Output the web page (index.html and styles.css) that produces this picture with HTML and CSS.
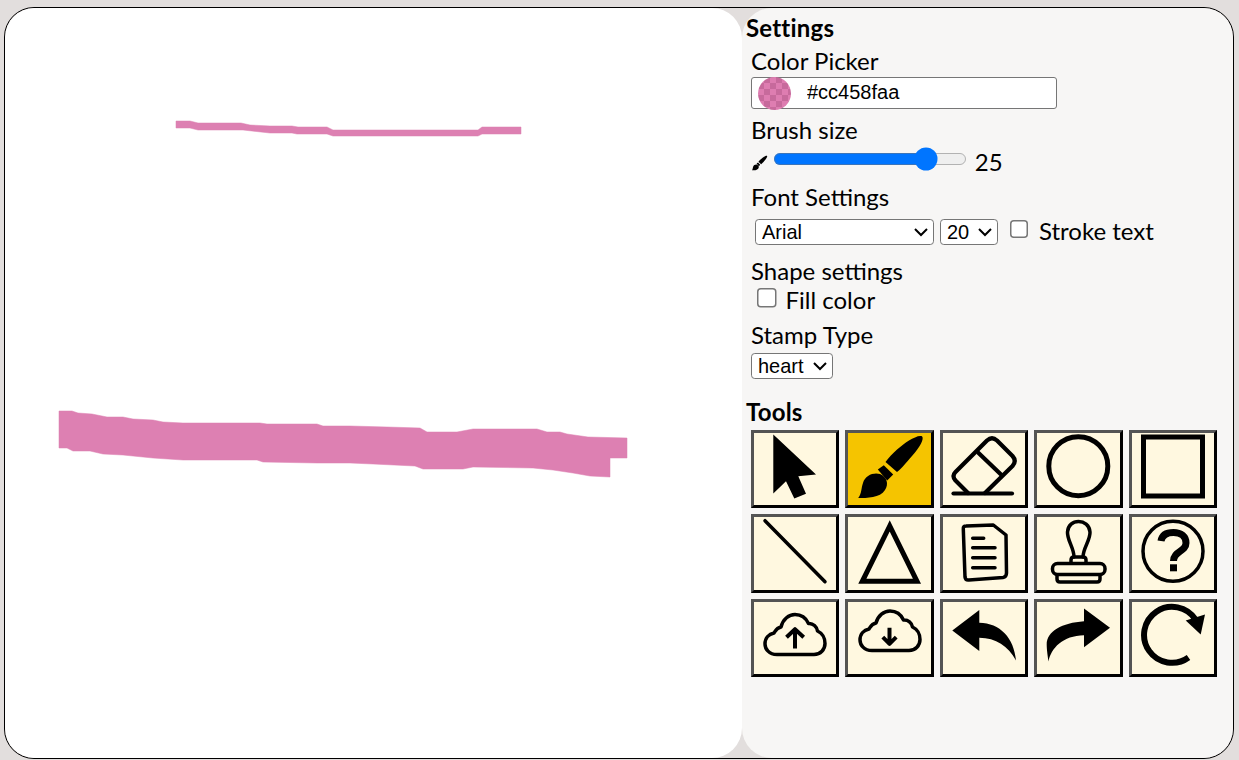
FILE: index.html
```html
<!DOCTYPE html>
<html lang="en">
<head>
  <meta charset="UTF-8">
  <title>Paint</title>
  <link rel="stylesheet" href="styles.css">
</head>
<body>

  <main class="app">
    <div class="canvas">
      <svg class="drawing" viewBox="5 8 737 750" width="737" height="750">
        <polygon class="ink" points="176,121 190,121 198,123 241,123 250,125 270,126 292,126 298,127 327,127 333,130 478,130 482,127 521,127 521,134 482,134 478,136 333,136 327,134 297,134 292,133 270,133 243,130 198,130 190,128 176,128"/>
        <polygon class="ink" points="59,411 72,411 78,413 92,414 107,417 123,417 133,419 153,420 163,422 183,423 260,423 267,424 317,424 323,426 350,426 387,427 420,428 427,432 457,432 473,429 537,429 547,432 560,432 567,434 588,437 627,438 627,458 610,458 610,477 590,476 573,473 553,470 533,468 473,467 463,469 423,469 415,466 373,464 350,463 317,463 263,462 257,460 183,460 153,458 123,455 103,454 90,451 73,451 67,448 59,448"/>
      </svg>
    </div>

    <aside class="panel">
      <h2 class="panel-title">Settings</h2>

      <div class="group group-color">
        <div class="group-label">Color Picker</div>
        <div class="color-field">
          <span class="swatch"></span>
          <input class="color-text" type="text" value="#cc458faa">
        </div>
      </div>

      <div class="group">
        <div class="group-label">Brush size</div>
        <div class="brush-row">
          <svg class="brush-mini" viewBox="0 0 72 72" width="17" height="17">
            <path d="M68 3.200C70.500 5.500 66 14 58 23C52 30 47 36 43 39L31.500 29C38 20 48 12 55 7.500C60 4.500 65 2 68 3.200Z"/>
            <path d="M23.800 36.500L29.800 32.200L39.200 41.500L33.200 47.500Z"/>
            <path d="M4.200 65C8 60 7 55 9 50C11 42 20 39 26 41C33 44 35 51 31 57C26 65 13 65 4.200 65Z"/>
          </svg>
          <input class="control brush-range" type="range" min="0" max="30" value="25">
          <span class="brush-value">25</span>
        </div>
      </div>

      <div class="group">
        <div class="group-label">Font Settings</div>
        <div class="font-row">
          <select class="control font-family"><option>Arial</option></select>
          <select class="control font-size"><option>20</option></select>
          <input class="control check check-stroke" type="checkbox">
          <span>Stroke text</span>
        </div>
      </div>

      <div class="group group-shape">
        <div class="group-label">Shape settings</div>
        <div class="fill-row">
          <input class="control check" type="checkbox">
          <span>Fill color</span>
        </div>
      </div>

      <div class="group">
        <div class="group-label">Stamp Type</div>
        <select class="control stamp-select"><option>heart</option></select>
      </div>

      <h2 class="panel-title tools-title">Tools</h2>

      <div class="tools">
        <button class="tool">
          <svg viewBox="0 0 72 72"><path d="M14.300 1.500L57 41.500L39.300 43.200L47 60.800L35.300 65.500L27 48.200L14.300 60.500Z"/></svg>
        </button>
        <button class="tool active">
          <svg viewBox="0 0 72 72">
            <path d="M68 3.200C70.500 5.500 66 14 58 23C52 30 47 36 43 39L31.500 29C38 20 48 12 55 7.500C60 4.500 65 2 68 3.200Z"/>
            <path d="M23.800 36.500L29.800 32.200L39.200 41.500L33.200 47.500Z"/>
            <path d="M4.200 65C8 60 7 55 9 50C11 42 20 39 26 41C33 44 35 51 31 57C26 65 13 65 4.200 65Z"/>
          </svg>
        </button>
        <button class="tool">
          <svg viewBox="0 0 72 72" class="line-icon icon-thick">
            <path d="M20 60L7.500 47.500Q3.500 43 7.500 39L39 7.500Q44 3 49 7.500L64.500 23Q69 28 64.500 33L37 60"/>
            <path d="M30.300 19.800L53 41.500"/>
            <path d="M5.500 60.500H64"/>
          </svg>
        </button>
        <button class="tool">
          <svg viewBox="0 0 72 72" class="line-icon"><circle cx="36.300" cy="33.200" r="29.500" stroke-width="5"/></svg>
        </button>
        <button class="tool">
          <svg viewBox="0 0 72 72" class="line-icon"><rect x="6.500" y="4" width="59" height="59" stroke-width="5" stroke-linejoin="miter"/></svg>
        </button>

        <button class="tool">
          <svg viewBox="0 0 72 72" class="line-icon"><path d="M6 2.700L66 63.700"/></svg>
        </button>
        <button class="tool">
          <svg viewBox="0 0 72 72" class="line-icon"><path d="M35.700 8L8.300 63.300H63Z" stroke-width="5" stroke-linejoin="miter"/></svg>
        </button>
        <button class="tool">
          <svg viewBox="0 0 72 72" class="line-icon">
            <path d="M15.300 11Q15 8 18 8L45.300 7L58 17L58.500 55Q58.500 59 55 59.500L21 62Q17.500 62.500 17 59Z"/>
            <path d="M24.700 20.300H35.700M24.700 29.700H47M24.700 39.700H47M24.700 49.700H47"/>
          </svg>
        </button>
        <button class="tool">
          <svg viewBox="0 0 72 72" class="line-icon">
            <path d="M32 39C32 30 25 22 25.500 14C26 7 31 3.500 36.500 3.500C42 3.500 47.500 7 48 14C48.500 22 41 30 41 39"/>
            <path d="M29 45V42Q29 39 32 39H41Q44 39 44 42V45"/>
            <rect x="10.500" y="45.500" width="52.500" height="11" rx="5"/>
            <path d="M15 57V61Q15 64 18 64H55Q58 64 58 61V57"/>
          </svg>
        </button>
        <button class="tool">
          <svg viewBox="0 0 72 72" class="line-icon">
            <circle cx="36" cy="33.300" r="30"/>
            <path d="M24 23C25 17 30 14.500 36.500 14.500C44 14.500 49 18.500 49 25C49 34 36.500 33 36.500 43" stroke-width="7" stroke-linecap="butt"/>
            <rect class="solid" x="33" y="46.300" width="7" height="7"/>
          </svg>
        </button>

        <button class="tool">
          <svg viewBox="0 0 72 72" class="line-icon">
            <path d="M18 52.500C10 52.500 6 47 6 42C6 36 10 32 15 31C17 28 17.500 26 22 25C24 17 30 12.500 36 12.500C42 12.500 47 16 49.500 21.500C54 21 58 25 58.500 29C63 31 66 36 66 41.500C66 47.500 61.500 52.500 55 52.500Z"/>
            <path d="M36 46.500V27.500M27.500 35.200L36 27.200L44.700 35.200" stroke-width="4" stroke-linecap="butt"/>
          </svg>
        </button>
        <button class="tool">
          <svg viewBox="0 0 72 72" class="line-icon">
            <path d="M18 48.500C10 48.500 6 43 6 38C6 32 10 28 15 27C17 24 17.500 22 22 21C24 13.500 30 9 36 9C42 9 47 12.500 49.500 18C54 17.500 58 21 58.500 25C63 27 66 32 66 37.500C66 43.500 61.500 48.500 55 48.500Z"/>
            <path d="M35.500 25.800V41M28.800 35.200L35.500 41.800L42.200 35.200" stroke-width="4" stroke-linecap="butt"/>
          </svg>
        </button>
        <button class="tool">
          <svg viewBox="0 0 72 72"><path d="M4.300 28.500L31.300 8V20.800C52 21 66 36 68 58.500C60 44 48 36 31.300 35.800V49Z"/></svg>
        </button>
        <button class="tool">
          <svg viewBox="0 0 72 72"><path d="M68 25.800L42 6.500V19.200C20 20.800 4.700 29 4.700 42.500C4.700 48 6 56 6.500 59.500C9 46 21 33.500 42 33.200V45.200Z"/></svg>
        </button>
        <button class="tool">
          <svg viewBox="0 0 72 72" class="line-icon">
            <path d="M58.500 17.500A28 28 0 1 0 51.500 55.500" stroke-width="6" stroke-linecap="butt"/>
            <path class="solid" d="M68 12.500L63.700 32.500L48.700 18.500Z"/>
          </svg>
        </button>
      </div>
    </aside>
  </main>

</body>
</html>
```

FILE: styles.css
```css
body {
  margin: 7px 5px 1px 4px;
  background: #e2dedd;
  font-family: "Lato", sans-serif;
  font-size: 24px;
  color: #000;
}

.app {
  display: flex;
  height: 752px;
  box-sizing: border-box;
  border: 1px solid #000;
  border-radius: 30px;
  overflow: hidden;
}

.canvas {
  flex: 0 0 737px;
  background: #fff;
  border-radius: 30px;
  overflow: hidden;
}

.drawing {
  display: block;
}

.ink {
  fill: #dd80b2;
  stroke: #dd80b2;
  stroke-opacity: 0.5;
  stroke-width: 1;
}

.panel {
  flex: 1;
  padding: 5px 16px 0 4px;
  background: #f7f6f5;
  border-radius: 30px;
}

.panel-title {
  margin: 0;
  font-size: 24px;
  font-weight: 700;
  line-height: 29px;
  letter-spacing: 0.2px;
}

.group {
  margin-left: 5px;
  margin-top: 6px;
}

.group-color {
  margin-top: 4px;
}

.group-label {
  line-height: 29px;
}

.control {
  zoom: 1.5;
}

.color-field {
  display: flex;
  align-items: center;
  box-sizing: border-box;
  width: 306px;
  height: 32px;
  margin-top: 2px;
  padding-left: 6px;
  background: #fff;
  border: 1px solid #767676;
  border-radius: 3px;
}

.swatch {
  flex: none;
  width: 33px;
  height: 33px;
  border-radius: 50%;
  background: repeating-conic-gradient(#c76a9c 0 25%, #de7db1 0 50%) 0 0 / 12px 12px;
}

.color-text {
  flex: 1;
  min-width: 0;
  margin: 0 0 2px 16px;
  padding: 0;
  border: 0;
  outline: 0;
  background: transparent;
  font-family: "Liberation Sans", sans-serif;
  font-size: 20px;
  color: #000;
}

.brush-row {
  display: flex;
  align-items: flex-start;
  height: 32px;
}

.brush-mini {
  flex: none;
  margin: 11px 0 0 0;
}

.brush-range {
  margin: 2px 0 0 3.5px;
}

.brush-value {
  margin: 3px 0 0 8px;
  line-height: 29px;
}

.font-row {
  display: flex;
  align-items: center;
  gap: 6px;
  margin: 6px 0 0 4px;
  height: 26px;
}

.font-row select {
  margin-top: 2.67px;
}

select.control {
  box-sizing: border-box;
  height: 17.33px;
  font-family: "Liberation Sans", sans-serif;
  font-size: 13.333px;
  color: #000;
  background-color: #fff;
  border: 0.67px solid #767676;
  border-radius: 2.5px;
}

.font-family {
  width: 119.33px;
}

.font-size {
  width: 38.67px;
}

.check {
  margin: 0;
  width: 13px;
  height: 13px;
  flex: none;
}

.check-stroke {
  margin: 0 2.33px 0.67px 4px;
}

.group-shape {
  margin-top: 13px;
}

.fill-row {
  display: flex;
  align-items: center;
  gap: 9px;
  height: 29px;
  margin-left: 6px;
}

.fill-row .check {
  margin-bottom: 1.7px;
}

.stamp-select {
  display: block;
  width: 54.67px;
  margin-top: 2.67px;
}

.tools-title {
  margin-top: 18px;
}

.tools {
  display: grid;
  grid-template-columns: repeat(5, 1fr);
  grid-auto-rows: 78.5px;
  gap: 6px;
  margin: 4px 0 0 5px;
}

.tool {
  display: flex;
  align-items: center;
  justify-content: center;
  padding: 0;
  background: #fff8e0;
  border: 3px outset #000;
  border-radius: 0;
  cursor: pointer;
}

.tool.active {
  background: #f5c400;
}

.tool svg {
  flex: none;
  width: 72px;
  height: 72px;
}

.line-icon {
  fill: none;
  stroke: #000;
  stroke-width: 3.5;
  stroke-linecap: round;
  stroke-linejoin: round;
}

.icon-thick {
  stroke-width: 4.2;
}

.line-icon .solid {
  fill: #000;
  stroke: none;
}
```
